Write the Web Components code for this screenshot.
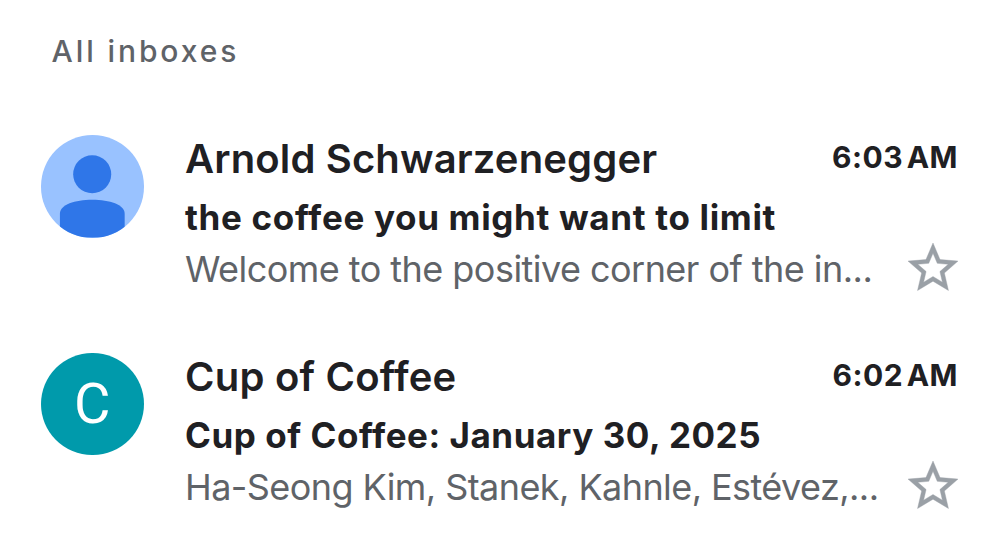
<!DOCTYPE html>
<html lang="en">
<head>
<meta charset="utf-8">
<title>All inboxes</title>
<style>
    body {
        margin: 0;
        background: #fff;
        color: #1f2023;
        font-family: Inter, "Liberation Sans", sans-serif;
    }
</style>
</head>
<body>
<inbox-list label="All inboxes">
    <mail-row sender="Arnold Schwarzenegger" time="6:03 AM" style="--sender-spacing: 0.15px; --subject-spacing: 0.67px">
        <mail-avatar slot="avatar"></mail-avatar>
        <span slot="subject">the coffee you might want to limit</span>
        <span slot="snippet">Welcome to the positive corner of the in...</span>
    </mail-row>
    <mail-row sender="Cup of Coffee" time="6:02 AM" style="--sender-spacing: 0.22px; --subject-spacing: 0.54px; --snippet-spacing: -0.57px">
        <mail-avatar slot="avatar" letter="C"></mail-avatar>
        <span slot="subject">Cup of Coffee: January 30, 2025</span>
        <span slot="snippet">Ha-Seong Kim, Stanek, Kahnle, Estévez,...</span>
    </mail-row>
</inbox-list>

<script>
// Round avatar: a letter when there is one, otherwise the default person
class MailAvatar extends HTMLElement {
    constructor() {
        super();
        this.attachShadow({ mode: "open" });
    }

    connectedCallback() {
        const letter = this.getAttribute('letter');
        const person = `
            <svg viewBox="0 0 103 103" aria-hidden="true">
                <circle cx="51.4" cy="39.4" r="19.1"/>
                <path d="M19 103V79C19 70 34 65 51.5 65S84 70 84 79V103Z"/>
            </svg>`;

        this.shadowRoot.innerHTML = `
            <style>
                :host {
                    display: flex;
                    align-items: center;
                    justify-content: center;
                    width: 102.6px;
                    height: 102.6px;
                    border-radius: 50%;
                    overflow: hidden;
                    background: ${letter ? '#009aab' : '#99c2ff'};
                    color: #fff;
                    font: 400 56px/1 Roboto, sans-serif;
                }
                svg {
                    width: 100%;
                    height: 100%;
                    fill: #2f76e8;
                }
            </style>
            ${letter ? `<span>${letter}</span>` : person}
        `;
    }
}

class StarButton extends HTMLElement {
    constructor() {
        super();
        this.attachShadow({ mode: "open" });
        this.shadowRoot.innerHTML = `
            <style>
                :host {
                    display: block;
                    width: 60px;
                    height: 60px;
                }
                svg {
                    display: block;
                    fill: #9aa0a6;
                    stroke: #9aa0a6;
                    stroke-width: 0.16;
                }
            </style>
            <svg width="60" height="60" viewBox="0 0 24 24" aria-hidden="true">
                <path d="M22 9.24l-7.19-.62L12 2 9.19 8.63 2 9.24l5.46 4.73L5.82 21 12 17.27 18.18 21l-1.63-7.03L22 9.24zM12 15.4l-3.76 2.27 1-4.28-3.32-2.88 4.38-.38L12 6.1l1.71 4.04 4.38.38-3.32 2.88 1 4.28L12 15.4z"/>
            </svg>
        `;
    }
}

class MailRow extends HTMLElement {
    constructor() {
        super();
        this.attachShadow({ mode: "open" });
    }

    connectedCallback() {
        this.shadowRoot.innerHTML = `
            <style>
                :host {
                    display: flex;
                    height: 217.6px;
                    padding: 0 42px 0 41px;
                    box-sizing: border-box;
                    white-space: nowrap;
                }
                .avatar {
                    flex: none;
                    width: 144px;
                    padding-top: 5px;
                }
                .text {
                    flex: 1;
                    min-width: 0;
                }
                .sender {
                    font-size: 40px;
                    line-height: 58px;
                    font-weight: 600;
                    letter-spacing: var(--sender-spacing, 0);
                }
                .subject {
                    font-size: 35px;
                    line-height: 58px;
                    font-weight: 700;
                    letter-spacing: var(--subject-spacing, 0);
                }
                .snippet {
                    font-size: 36px;
                    line-height: 47px;
                    color: #5f6368;
                    letter-spacing: var(--snippet-spacing, -0.54px);
                }
                .side {
                    flex: none;
                    width: 0;
                    display: flex;
                    flex-direction: column;
                    align-items: flex-end;
                }
                .time {
                    font-size: 30px;
                    line-height: 55px;
                    font-weight: 700;
                    letter-spacing: 0.5px;
                    word-spacing: -4px;
                }
                star-button {
                    margin: 53.2px -4.8px 0 0;
                }
            </style>
            <div class="avatar"><slot name="avatar"></slot></div>
            <div class="text">
                <div class="sender">${this.getAttribute('sender')}</div>
                <div class="subject"><slot name="subject"></slot></div>
                <div class="snippet"><slot name="snippet"></slot></div>
            </div>
            <div class="side">
                <div class="time">${this.getAttribute('time')}</div>
                <star-button></star-button>
            </div>
        `;
    }
}

class InboxList extends HTMLElement {
    constructor() {
        super();
        this.attachShadow({ mode: "open" });
    }

    connectedCallback() {
        this.shadowRoot.innerHTML = `
            <style>
                :host {
                    display: block;
                    height: 550px;
                    overflow: hidden;
                }
                header {
                    height: 130px;
                    padding: 26px 0 0 51.5px;
                    box-sizing: border-box;
                    color: #5f6368;
                    font-size: 30px;
                    line-height: 50px;
                    font-weight: 450;
                    letter-spacing: 2.9px;
                }
            </style>
            <header>${this.getAttribute('label')}</header>
            <slot></slot>
        `;
    }
}

customElements.define("mail-avatar", MailAvatar);
customElements.define("star-button", StarButton);
customElements.define("mail-row", MailRow);
customElements.define("inbox-list", InboxList);
</script>
</body>
</html>
